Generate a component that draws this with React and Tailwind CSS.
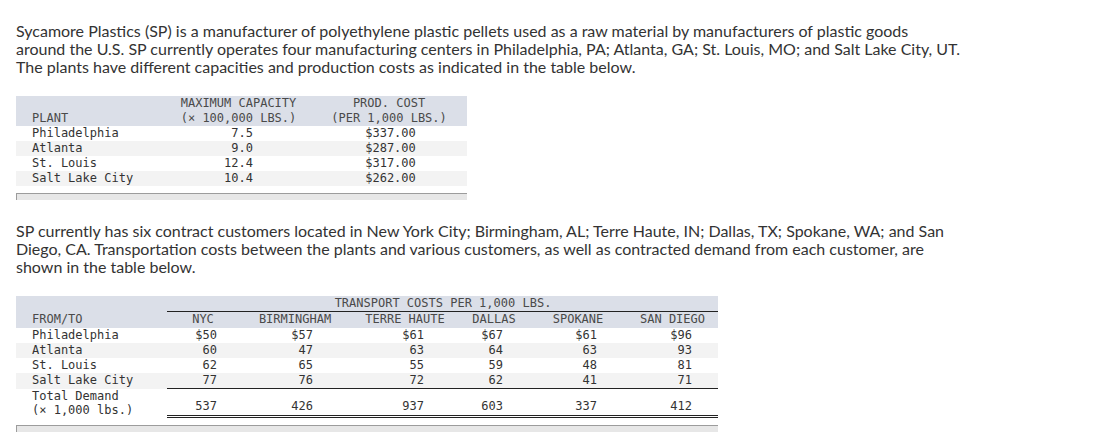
import React from "react";

const mono = { fontFamily: '"DejaVu Sans Mono", "Liberation Mono", monospace' };
const sans = { fontFamily: 'Lato, "Open Sans", sans-serif' };

const plants = [
  { name: "Philadelphia", cap: "7.5", cost: "$337.00" },
  { name: "Atlanta", cap: "9.0", cost: "$287.00" },
  { name: "St. Louis", cap: "12.4", cost: "$317.00" },
  { name: "Salt Lake City", cap: "10.4", cost: "$262.00" },
];

// column widths + right padding for the transport table
const cols = [
  { label: "NYC", w: "w-[72px]", pr: "pr-[22px]" },
  { label: "BIRMINGHAM", w: "w-[112px]", pr: "pr-[38px]" },
  { label: "TERRE HAUTE", w: "w-[108px]", pr: "pr-[35px]" },
  { label: "DALLAS", w: "w-[70px]", pr: "pr-[26px]" },
  { label: "SPOKANE", w: "w-[98px]", pr: "pr-[30px]" },
  { label: "SAN DIEGO", w: "w-[91px]", pr: "pr-[26px]" },
];

const routes = [
  { from: "Philadelphia", v: ["$50", "$57", "$61", "$67", "$61", "$96"] },
  { from: "Atlanta", v: ["60", "47", "63", "64", "63", "93"] },
  { from: "St. Louis", v: ["62", "65", "55", "59", "48", "81"] },
  { from: "Salt Lake City", v: ["77", "76", "72", "62", "41", "71"] },
];
const demand = ["537", "426", "937", "603", "337", "412"];

const ScrollBar = () => (
  <div className="mt-[7px] h-[7px] border-t border-l border-[#9c9c9c] bg-[#e7e7e7]" />
);

const PlantTable = () => (
  <div className="w-[451px] mt-[20px] text-[12px] leading-[15px] text-[#333]" style={mono}>
    <div className="bg-[#dbdfe8] text-[#4a4a4a]">
      <div className="flex">
        <div className="w-[150px]" />
        <div className="w-[145px] text-center">MAXIMUM CAPACITY</div>
        <div className="w-[156px] text-center">PROD. COST</div>
      </div>
      <div className="flex">
        <div className="w-[150px] pl-[16px]">PLANT</div>
        <div className="w-[145px] text-center">(× 100,000 LBS.)</div>
        <div className="w-[156px] text-center">(PER 1,000 LBS.)</div>
      </div>
    </div>
    {plants.map((p, i) => (
      <div key={p.name} className={`flex ${i % 2 === 1 ? "bg-[#f3f3f3]" : "bg-white"}`}>
        <div className="w-[150px] pl-[16px]">{p.name}</div>
        <div className="w-[145px] text-right pr-[58px]">{p.cap}</div>
        <div className="w-[156px] text-center pl-[3px]">{p.cost}</div>
      </div>
    ))}
    <ScrollBar />
  </div>
);

const TransportTable = () => (
  <div className="w-[702px] mt-[20px] text-[12px] leading-[15px] text-[#333]" style={mono}>
    <div className="bg-[#dbdfe8] text-[#4a4a4a] pb-[1px]">
      <div className="flex">
        <div className="w-[151px]" />
        <div className="flex-1 text-center border-b border-[#222] pl-[1px]">TRANSPORT COSTS PER 1,000 LBS.</div>
      </div>
      <div className="flex">
        <div className="w-[151px] pl-[16px]">FROM/TO</div>
        {cols.map((c) => (
          <div key={c.label} className={`${c.w} text-center`}>{c.label}</div>
        ))}
      </div>
    </div>
    {routes.map((r, i) => (
      <div key={r.from} className={`flex ${i % 2 === 1 ? "bg-[#f3f3f3]" : "bg-white"}`}>
        <div className="w-[151px] pl-[16px]">{r.from}</div>
        <div className={`flex flex-1 ${i === routes.length - 1 ? "border-b border-[#222]" : ""}`}>
          {r.v.map((v, j) => (
            <div key={j} className={`${cols[j].w} ${cols[j].pr} text-right`}>{v}</div>
          ))}
        </div>
      </div>
    ))}
    <div className="flex">
      <div className="w-[151px] pl-[16px] h-[26px] leading-[14px]">
        Total Demand<br />(× 1,000 lbs.)
      </div>
      <div className="flex flex-1 h-[29px] border-b-[3px] border-double border-[#222]">
        {demand.map((v, j) => (
          <div key={j} className={`${cols[j].w} ${cols[j].pr} text-right pt-[10px]`}>{v}</div>
        ))}
      </div>
    </div>
    <ScrollBar />
  </div>
);

export default function App() {
  return (
    <div className="w-[1104px] h-[443px] bg-white pl-[16px] pt-[22px] overflow-hidden">
      <p className="text-[16px] leading-[18px] text-[#333] whitespace-nowrap" style={sans}>
        Sycamore Plastics (SP) is a manufacturer of polyethylene plastic pellets used as a raw material by manufacturers of plastic goods
        <br />
        around the U.S. SP currently operates four manufacturing centers in Philadelphia, PA; Atlanta, GA; St. Louis, MO; and Salt Lake City, UT.
        <br />
        The plants have different capacities and production costs as indicated in the table below.
      </p>
      <PlantTable />
      <p className="mt-[22px] text-[16px] leading-[18px] text-[#333] whitespace-nowrap" style={sans}>
        SP currently has six contract customers located in New York City; Birmingham, AL; Terre Haute, IN; Dallas, TX; Spokane, WA; and San
        <br />
        Diego, CA. Transportation costs between the plants and various customers, as well as contracted demand from each customer, are
        <br />
        shown in the table below.
      </p>
      <TransportTable />
    </div>
  );
}
